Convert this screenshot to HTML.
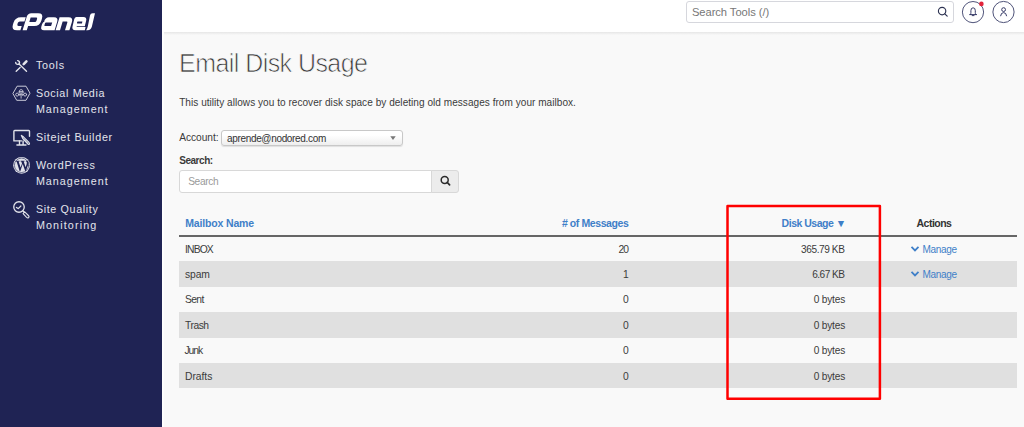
<!DOCTYPE html>
<html><head><meta charset="utf-8"><title>Email Disk Usage</title>
<style>
html,body{margin:0;padding:0;width:1024px;height:427px;overflow:hidden;background:#f9f9f9}
body{position:relative;font-family:"Liberation Sans",sans-serif}
.t{position:absolute;white-space:nowrap;font-family:"Liberation Sans",sans-serif}
.r{position:absolute}
</style></head><body>
<div class="r" style="left:0px;top:0px;width:1024.00px;height:427.00px;background:#f9f9f9"></div>
<div class="r" style="left:162px;top:0px;width:862.00px;height:32.00px;background:#fff"></div>
<div class="r" style="left:162px;top:32px;width:862.00px;height:3.00px;background:linear-gradient(#e6e6e6,#f9f9f9)"></div>
<div class="r" style="left:162px;top:32px;width:2.00px;height:395.00px;background:linear-gradient(90deg,#fff,#fcfcfc)"></div>
<div class="r" style="left:0px;top:0px;width:162.00px;height:427.00px;background:#1f2354"></div>
<svg class="r" style="left:0;top:0" width="110" height="40" viewBox="0 0 110 40">
<g fill="#fff" transform="translate(0,30.2) skewX(-17)">
<path d="M21.8 -13 H17 Q11.2 -13 11.2 -7.5 V-5.5 Q11.2 0 17 0 H20.4 V-4.3 H17.2 Q15.6 -4.3 15.6 -5.9 V-7.1 Q15.6 -8.7 17.2 -8.7 H21.8 Z"/>
<path d="M22.6 0 V-13.5 Q22.6 -17 26.1 -17 H33 Q38.4 -17 38.4 -11.6 V-9.8 Q38.4 -4.3 33 -4.3 H26.8 V0 Z M26.8 -12.6 V-8.2 H32.4 Q33.6 -8.2 33.6 -9.4 V-11.4 Q33.6 -12.6 32.4 -12.6 Z" fill-rule="evenodd"/>
<path d="M45 -13 H50 Q54.6 -13 54.6 -8.4 V0 H44 Q40.2 0 40.2 -3.8 V-6 Q40.2 -8.4 42.6 -8.4 H41.4 Q41.4 -13 45 -13 Z M43.6 -7.8 H49.8 V-4.2 H43.6 Q42.9 -4.2 42.9 -4.9 V-7.1 Q42.9 -7.8 43.6 -7.8 Z" fill-rule="evenodd"/>
<path d="M55.6 0 V-13 H64.6 Q69.4 -13 69.4 -8.2 V0 H65 V-7.7 Q65 -8.7 64 -8.7 H60 V0 Z"/>
</g>
<path fill="#fff" d="M76.5 17 H83.3 Q87.2 17 86.1 21 L85.2 24.6 L84.8 26.2 H76.8 L76.6 27 H85.6 L84.8 30.2 H75.5 Q71.6 30.2 72.5 26.5 L73.7 21.2 Q74.6 17 76.5 17 Z M77.6 21.4 H82.4 L81.9 23.4 H77.4 Q76.8 23.4 77 22.8 L77.2 22 Q77.3 21.4 77.6 21.4 Z" fill-rule="evenodd"/>
<path fill="#fff" d="M86 30.2 Q87.3 29 87.9 26 L90 15.6 Q90.4 13.3 92.6 13.3 H95 L91.9 26.5 Q91 30.2 87.6 30.2 Z"/>
</svg>
<div class="t" style="left:35.90px;top:59px;font-size:10.75px;line-height:13px;font-weight:400;color:#e4e5ec;letter-spacing:0.795px;">Tools</div>
<div class="t" style="left:35.90px;top:87px;font-size:10.75px;line-height:13px;font-weight:400;color:#e4e5ec;letter-spacing:0.639px;">Social Media</div>
<div class="t" style="left:35.90px;top:103px;font-size:10.75px;line-height:13px;font-weight:400;color:#e4e5ec;letter-spacing:0.993px;">Management</div>
<div class="t" style="left:35.90px;top:131px;font-size:10.75px;line-height:13px;font-weight:400;color:#e4e5ec;letter-spacing:0.711px;">Sitejet Builder</div>
<div class="t" style="left:35.90px;top:159px;font-size:10.75px;line-height:13px;font-weight:400;color:#e4e5ec;letter-spacing:0.751px;">WordPress</div>
<div class="t" style="left:35.90px;top:175px;font-size:10.75px;line-height:13px;font-weight:400;color:#e4e5ec;letter-spacing:1.016px;">Management</div>
<div class="t" style="left:35.90px;top:203px;font-size:10.75px;line-height:13px;font-weight:400;color:#e4e5ec;letter-spacing:0.628px;">Site Quality</div>
<div class="t" style="left:35.90px;top:219px;font-size:10.75px;line-height:13px;font-weight:400;color:#e4e5ec;letter-spacing:1.132px;">Monitoring</div>
<div class="r" style="left:686px;top:1px;width:268.00px;height:22.00px;background:#fff;border:1px solid #d6d7dd;border-radius:3px;box-sizing:border-box"></div>
<div class="t" style="left:691.90px;top:6px;font-size:11.2px;line-height:13px;font-weight:400;color:#777;letter-spacing:-0.054px;">Search Tools (/)</div>
<svg class="r" style="left:936px;top:5px" width="14" height="14" viewBox="0 0 14 14"><circle cx="6.1" cy="6.1" r="3.7" fill="none" stroke="#2d3352" stroke-width="1.15"/><line x1="8.8" y1="8.8" x2="11.2" y2="11.2" stroke="#2d3352" stroke-width="1.2" stroke-linecap="round"/></svg>
<svg class="r" style="left:960px;top:0px" width="60" height="25" viewBox="0 0 60 25">
<circle cx="13" cy="12.1" r="10.6" fill="none" stroke="#50547a" stroke-width="1"/>
<circle cx="43.5" cy="12" r="10.6" fill="none" stroke="#50547a" stroke-width="1"/>
<path d="M9.6 14.6 L16.6 14.6 M10.6 14.4 Q10.9 13.6 10.9 12.5 L10.9 10.6 Q10.9 7.8 13.1 7.8 Q15.3 7.8 15.3 10.6 L15.3 12.5 Q15.3 13.6 15.6 14.4 M12.2 15.6 L14 15.6" fill="none" stroke="#2d3160" stroke-width="0.95" stroke-linecap="round"/>
<circle cx="21.4" cy="3.9" r="2.3" fill="#e2243b"/>
<circle cx="43.6" cy="9.6" r="1.9" fill="none" stroke="#2d3160" stroke-width="0.95"/>
<path d="M40.6 15.8 Q41 12.6 43.6 12.6 Q46.2 12.6 46.6 15.8" fill="none" stroke="#2d3160" stroke-width="0.95" stroke-linecap="round"/>
</svg>
<div class="t" style="left:179.10px;top:48px;font-size:25px;line-height:30px;font-weight:400;color:#3c3c3c;letter-spacing:-0.565px;-webkit-text-stroke:0.7px #f9f9f9;">Email Disk Usage</div>
<div class="t" style="left:179.20px;top:97px;font-size:10.05px;line-height:12px;font-weight:400;color:#3b3b3b;letter-spacing:0.034px;">This utility allows you to recover disk space by deleting old messages from your mailbox.</div>
<div class="t" style="left:179.20px;top:132px;font-size:10.2px;line-height:12px;font-weight:400;color:#3b3b3b;letter-spacing:-0.044px;">Account:</div>
<div class="r" style="left:221px;top:130px;width:182.00px;height:16.00px;background:linear-gradient(#fff 30%,#eeeeee);border:1px solid #c8c8c8;border-radius:3px;box-sizing:border-box;box-shadow:0 1px 1px rgba(0,0,0,0.1)"></div>
<div class="t" style="left:227.00px;top:133px;font-size:10px;line-height:12px;font-weight:400;color:#333;letter-spacing:-0.333px;">aprende@nodored.com</div>
<svg class="r" style="left:390px;top:135.8px" width="6" height="4" viewBox="0 0 6 4"><path d="M0.3 0.3 L5.7 0.3 L3 3.9Z" fill="#777"/></svg>
<div class="t" style="left:179.20px;top:155px;font-size:10px;line-height:12px;font-weight:700;color:#3b3b3b;letter-spacing:-0.459px;">Search:</div>
<div class="r" style="left:179px;top:170px;width:253.00px;height:23.00px;background:#fff;border:1px solid #d8d8d8;border-radius:3px 0 0 3px;box-sizing:border-box"></div>
<div class="t" style="left:188.20px;top:176px;font-size:10.2px;line-height:12px;font-weight:400;color:#9a9a9a;letter-spacing:-0.363px;">Search</div>
<div class="r" style="left:431px;top:170px;width:28.00px;height:23.00px;background:#ececec;border:1px solid #d8d8d8;border-radius:0 3px 3px 0;box-sizing:border-box"></div>
<svg class="r" style="left:438px;top:173px" width="14" height="14" viewBox="0 0 14 14"><circle cx="6.7" cy="6.9" r="3.5" fill="none" stroke="#2a2a2a" stroke-width="1.5"/><line x1="9.2" y1="9.4" x2="11.6" y2="11.8" stroke="#2a2a2a" stroke-width="1.7" stroke-linecap="round"/></svg>
<div class="t" style="left:185.20px;top:217px;font-size:10.5px;line-height:13px;font-weight:700;color:#3f7fc8;letter-spacing:-0.151px;">Mailbox Name</div>
<div class="t" style="left:561.90px;top:217px;font-size:10.5px;line-height:13px;font-weight:700;color:#3f7fc8;letter-spacing:-0.404px;"># of Messages</div>
<div class="t" style="left:781.60px;top:217px;font-size:10.5px;line-height:13px;font-weight:700;color:#3f7fc8;letter-spacing:-0.484px;">Disk Usage ▼</div>
<div class="t" style="left:916.50px;top:217px;font-size:10.5px;line-height:13px;font-weight:700;color:#333;letter-spacing:-0.511px;">Actions</div>
<div class="t" style="left:185.10px;top:244px;font-size:10.3px;line-height:12px;font-weight:400;color:#3b3b3b;letter-spacing:-0.869px;">INBOX</div>
<div class="t" style="left:618.40px;top:244px;font-size:10.3px;line-height:12px;font-weight:400;color:#3b3b3b;letter-spacing:-0.827px;">20</div>
<div class="t" style="left:801.10px;top:244px;font-size:10.1px;line-height:12px;font-weight:400;color:#3b3b3b;letter-spacing:-0.414px;">365.79 KB</div>
<svg class="r" style="left:910px;top:245.50px" width="10" height="7" viewBox="0 0 10 7"><path d="M1.5 0.9 L5 4.4 L8.5 0.9" fill="none" stroke="#3f7fc8" stroke-width="1.8"/></svg>
<div class="t" style="left:922.60px;top:244px;font-size:10.05px;line-height:12px;font-weight:400;color:#3f7fc8;letter-spacing:-0.364px;">Manage</div>
<div class="r" style="left:179px;top:261.2px;width:838.30px;height:25.45px;background:#e0e0e0"></div>
<div class="t" style="left:185.10px;top:269px;font-size:10.3px;line-height:12px;font-weight:400;color:#3b3b3b;letter-spacing:-0.134px;">spam</div>
<div class="t" style="left:623.10px;top:269px;font-size:10.3px;line-height:12px;font-weight:400;color:#3b3b3b;">1</div>
<div class="t" style="left:812.20px;top:269px;font-size:10.1px;line-height:12px;font-weight:400;color:#3b3b3b;letter-spacing:-0.530px;">6.67 KB</div>
<svg class="r" style="left:910px;top:270.50px" width="10" height="7" viewBox="0 0 10 7"><path d="M1.5 0.9 L5 4.4 L8.5 0.9" fill="none" stroke="#3f7fc8" stroke-width="1.8"/></svg>
<div class="t" style="left:922.60px;top:269px;font-size:10.05px;line-height:12px;font-weight:400;color:#3f7fc8;letter-spacing:-0.364px;">Manage</div>
<div class="t" style="left:185.10px;top:294px;font-size:10.3px;line-height:12px;font-weight:400;color:#3b3b3b;letter-spacing:-0.674px;">Sent</div>
<div class="t" style="left:623.10px;top:294px;font-size:10.3px;line-height:12px;font-weight:400;color:#3b3b3b;">0</div>
<div class="t" style="left:813.70px;top:294px;font-size:10.1px;line-height:12px;font-weight:400;color:#3b3b3b;letter-spacing:-0.166px;">0 bytes</div>
<div class="r" style="left:179px;top:312.1px;width:838.30px;height:25.45px;background:#e0e0e0"></div>
<div class="t" style="left:185.10px;top:320px;font-size:10.3px;line-height:12px;font-weight:400;color:#3b3b3b;letter-spacing:-0.503px;">Trash</div>
<div class="t" style="left:623.10px;top:320px;font-size:10.3px;line-height:12px;font-weight:400;color:#3b3b3b;">0</div>
<div class="t" style="left:813.70px;top:320px;font-size:10.1px;line-height:12px;font-weight:400;color:#3b3b3b;letter-spacing:-0.166px;">0 bytes</div>
<div class="t" style="left:184.40px;top:345px;font-size:10.3px;line-height:12px;font-weight:400;color:#3b3b3b;letter-spacing:-1.001px;">Junk</div>
<div class="t" style="left:623.10px;top:345px;font-size:10.3px;line-height:12px;font-weight:400;color:#3b3b3b;">0</div>
<div class="t" style="left:813.70px;top:345px;font-size:10.1px;line-height:12px;font-weight:400;color:#3b3b3b;letter-spacing:-0.166px;">0 bytes</div>
<div class="r" style="left:179px;top:363.0px;width:838.30px;height:25.45px;background:#e0e0e0"></div>
<div class="t" style="left:185.10px;top:371px;font-size:10.3px;line-height:12px;font-weight:400;color:#3b3b3b;letter-spacing:-0.043px;">Drafts</div>
<div class="t" style="left:623.10px;top:371px;font-size:10.3px;line-height:12px;font-weight:400;color:#3b3b3b;">0</div>
<div class="t" style="left:813.70px;top:371px;font-size:10.1px;line-height:12px;font-weight:400;color:#3b3b3b;letter-spacing:-0.166px;">0 bytes</div>
<div class="r" style="left:179px;top:235px;width:838.30px;height:2.00px;background:#666"></div>
<svg class="r" style="left:700px;top:190px" width="200" height="230" viewBox="700 190 200 230"><rect x="727.5" y="206.1" width="152.4" height="192.6" fill="none" stroke="#ff0000" stroke-width="2.5" stroke-linejoin="round"/></svg>
<svg class="r" style="left:0;top:0" width="162" height="240" viewBox="0 0 162 240" fill="none" stroke="#e2e3ea" stroke-width="1.4" stroke-linecap="round" stroke-linejoin="round">
<path d="M19.3 64.3 L26.5 71.3"/>
<path d="M17.6 60.6 A1.9 1.9 0 1 1 15.7 62.5"/>
<path d="M23.7 64.1 L26.4 61.4" stroke-width="2.6"/>
<path d="M16.2 71.3 L20.1 67.5" stroke-width="1.4"/>
<path d="M13.1 93.2 L17.1 86.2 L26 86.2 L30 93.2 L26 100.3 L17.1 100.3 Z" stroke="#c9cad8" stroke-width="1"/>
<g stroke="#c9cad8" stroke-width="0.9">
<path d="M19 92.6 Q19 89.5 21.1 89.5 Q23.2 89.5 23.2 92.6 Z M19.2 91.6 H23"/>
<circle cx="17.2" cy="94.6" r="1.5"/><circle cx="25.1" cy="94.6" r="1.5"/>
<path d="M18.7 94.6 H19.9 M22.3 94.6 H23.6 M19.9 95.6 L21.1 93.6 L22.3 95.6 M21.1 95.6 V98.2"/>
</g>
<path d="M21.5 140.9 H13.9 V131.3 Q13.9 130.5 14.7 130.5 H28.7 Q29.5 130.5 29.5 131.3 V136.3"/>
<path d="M19.5 141 V144.4 M23.1 141 V144.4 M16.9 145 H26"/>
<path d="M21.4 135.4 L22.8 138.6 L28.2 144.3 Q29.2 144.8 29.5 143.9 Q29.6 143 28.9 142.4 L23.4 136.8 Z" stroke-width="1.2"/>
<path d="M23.5 138.6 L28 143.2" stroke-width="0.8"/>
<circle cx="21.6" cy="165.3" r="8.4" fill="#e2e3ea" stroke="none"/>
<circle cx="21.6" cy="165.3" r="7.2" stroke="#1f2354" stroke-width="0.6"/>
<circle cx="19" cy="207" r="5.25" stroke-width="1.3"/>
<path d="M16.4 207.4 L18.2 208.6 L20.9 206" stroke-width="1.2"/>
<path d="M23.1 211 L24.3 212.2" stroke-width="1.3"/>
<path d="M24.7 211.9 L28.4 215.5 Q29.6 216.7 28.6 217.6 Q27.7 218.4 26.6 217.3 L23.1 213.6 Z" stroke-width="1.1"/>
</svg>
<svg class="r" style="left:0;top:150px" width="40" height="30" viewBox="0 150 40 30"><path fill="#1f2354" d="M15.6 160.8 H19.6 V161.4 L18.6 161.5 L20.6 167.4 L22 163.4 L21.3 161.5 L20.6 161.4 V160.8 H24.6 V161.4 L23.7 161.5 L25.6 167.3 L26.6 164.2 Q27.2 162.3 26.4 161.5 L25.8 161.4 V160.8 H28 Q28.9 161.8 28.4 164 L25.9 171 H25.2 L22.7 164 L20.4 171 H19.6 L16.6 161.5 L15.6 161.4 Z"/></svg>
</body></html>
